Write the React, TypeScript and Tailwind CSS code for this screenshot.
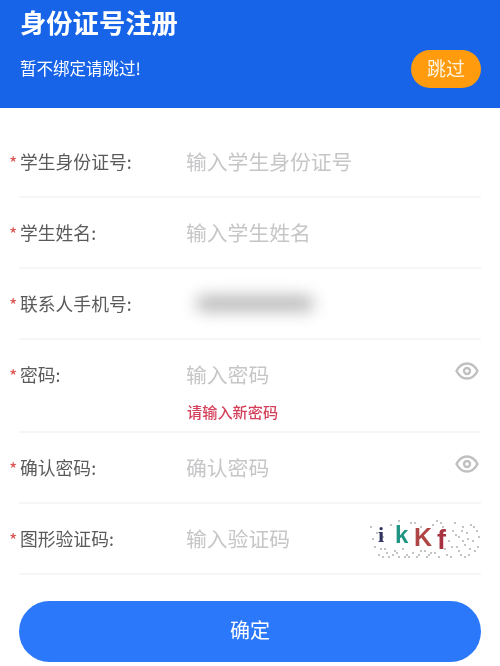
import React from "react";

function Eye() {
  return (
    <svg width="24" height="20" viewBox="0 0 24 20" fill="none" stroke="#c0c0c0" strokeWidth="2.400" className="mr-[2px] mt-[-7px]">
      <path d="M1.500 10C4 5.200 7.600 2.500 12 2.500S20 5.200 22.500 10C20 14.800 16.400 17.500 12 17.500S4 14.800 1.500 10Z" />
      <circle cx="12" cy="10" r="3" />
    </svg>
  );
}

const dots: [number, number][] = [
  [2,8],[6,28],[10,36],[14,18],[18,34],[22,6],[26,32],[30,38],[34,30],[38,36],[42,4],[44,34],[48,38],[52,8],[56,32],[60,36],[64,6],[66,34],[70,38],[74,8],[76,30],[80,22],[82,38],[84,12],[86,4],[88,28],[90,18],[92,36],[94,8],[96,26],[98,14],[100,36],[102,6],[104,22],[106,32],[108,12],[72,4],[78,36],[68,2],[58,38],[36,38],[24,36],[16,30],[8,14],[4,20],[90,32],[96,38],[83,28],[87,16],[101,30],[40,38],[28,34],[12,30],[62,34],[50,36],[94,22],[110,18],[109,28],[105,8],[99,20],[93,12],[30,2],[46,4],[20,38],[14,38],[52,32],
];

function Captcha() {
  return (
    <div className="relative w-[113px] h-[41px] shrink-0 overflow-hidden">
      <svg className="absolute inset-0 blur-[0.6px]" width="113" height="41" viewBox="0 0 113 41">
        {dots.map(([x, y], i) => (
          <rect key={i} x={x} y={y} width="2" height="2" fill="#c4c4c4" />
        ))}
      </svg>
      <span className="absolute left-[10px] top-[4px] text-[22px] leading-[26px] font-bold text-[#2f3360] font-['Liberation_Serif',serif]">i</span>
      <span className="absolute left-[27px] top-[4px] text-[24px] leading-[26px] font-bold text-[#1f9483] font-['Liberation_Sans',sans-serif]">k</span>
      <span className="absolute left-[46px] top-[6px] text-[25px] leading-[26px] font-bold text-[#b04545] font-['Liberation_Sans',sans-serif]">K</span>
      <span className="absolute left-[69px] top-[8px] text-[27px] leading-[28px] font-bold text-[#a8323f] font-['Liberation_Sans',sans-serif]">f</span>
    </div>
  );
}

function Row({
  label,
  placeholder,
  children,
  error,
}: {
  label: string;
  placeholder?: string;
  children?: React.ReactNode;
  error?: string;
}) {
  return (
    <div className={`flex flex-col border-b-2 border-[#f6f6f6] ${error ? "h-[93px]" : "h-[71px]"}`}>
      <div className="flex items-center h-[69px] shrink-0">
        <div className="relative w-[167px] shrink-0 pl-[1px] mt-[-2px] text-[17.800px] leading-[26px] text-[#5a5a5a]">
          <span className="absolute left-[-10px] top-[1px] text-[18px] leading-[26px] text-[#d9534f]">*</span>
          {label}
        </div>
        <div className="flex-1 min-w-0 text-[20.800px] text-[#c6c6c8]">{placeholder}</div>
        {children}
      </div>
      {error && (
        <div className="ml-[168px] mt-[-8px] text-[15.200px] leading-[20px] font-medium text-[#d4415a]">{error}</div>
      )}
    </div>
  );
}

export default function App() {
  return (
    <div className="w-[500px] h-[666px] overflow-hidden bg-white blur-[0.4px] font-['Noto_Sans_CJK_SC','Noto_Sans',sans-serif]">
      <header className="h-[108px] bg-[#1764e8] pl-[20px] pr-[19px] pt-[4px] text-white">
        <h1 className="text-[26.300px] leading-[36px] font-bold">身份证号注册</h1>
        <div className="flex items-center justify-between mt-[10px]">
          <span className="text-[16.500px] leading-[24px] mt-[-2px]">暂不绑定请跳过!</span>
          <button className="w-[70px] h-[38px] rounded-full bg-[#ff9b0d] text-[19px] leading-[36px] pb-[2px] text-[#fff4df]">跳过</button>
        </div>
      </header>
      <main className="relative px-[19px] pt-[19px]">
        <Row label="学生身份证号:" placeholder="输入学生身份证号" />
        <Row label="学生姓名:" placeholder="输入学生姓名" />
        <Row label="联系人手机号:">
          <div className="absolute left-[196px] w-[118px] h-[15px] rounded-full bg-[#b4b4b4] blur-[8px]" />
        </Row>
        <Row label="密码:" placeholder="输入密码" error="请输入新密码">
          <Eye />
        </Row>
        <Row label="确认密码:" placeholder="确认密码">
          <Eye />
        </Row>
        <Row label="图形验证码:" placeholder="输入验证码">
          <Captcha />
        </Row>
        <button className="block w-full h-[61px] mt-[26px] pb-[4px] rounded-full bg-[#2b78fb] text-white text-[20px]">确定</button>
      </main>
    </div>
  );
}
